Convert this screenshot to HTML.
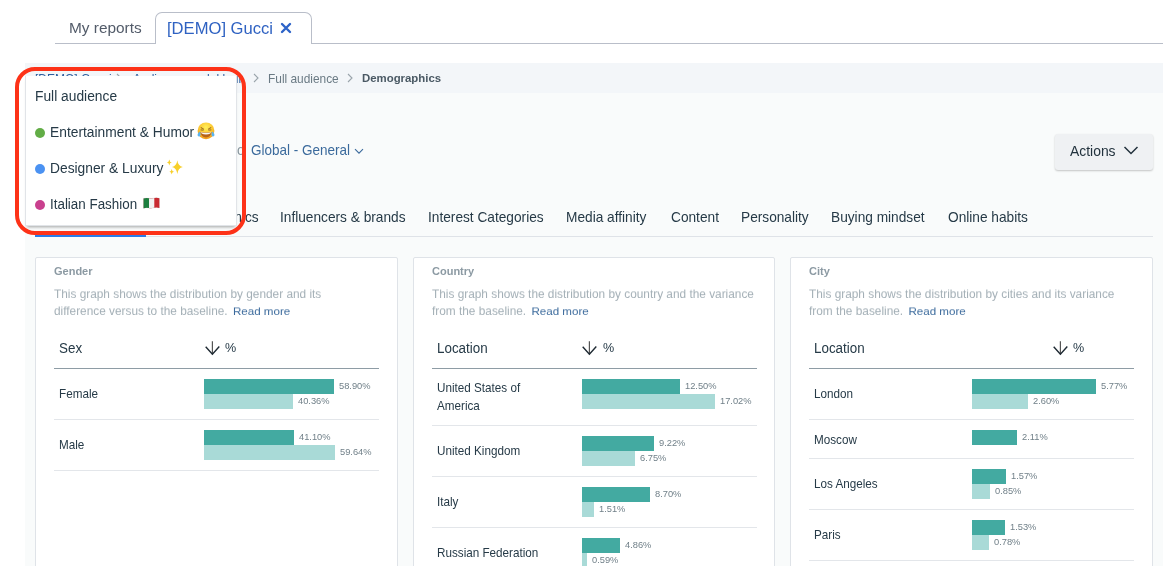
<!DOCTYPE html>
<html><head><meta charset="utf-8"><style>
html,body{margin:0;padding:0;}
body{width:1164px;height:566px;overflow:hidden;position:relative;background:#fff;font-family:"Liberation Sans", sans-serif;}
.t{position:absolute;white-space:nowrap;will-change:transform;}
.r{position:absolute;}
</style></head><body>
<div class="r" style="left:55px;top:43px;width:1108px;height:1px;background:#b9bec9"></div>
<div class="t" style="left:68.5px;top:19.02px;font-size:15.4px;line-height:18.48px;color:#525b69;font-weight:normal;">My reports</div>
<div class="r" style="left:155px;top:12px;width:157px;height:32px;background:#fff;border:1px solid #b9bec9;border-bottom:none;border-radius:7px 7px 0 0;box-sizing:border-box"></div>
<div class="t" style="left:167px;top:18.69px;font-size:16.6px;line-height:19.92px;color:#2f62c2;font-weight:normal;">[DEMO] Gucci</div>
<svg class="r" style="left:280px;top:22px" width="12" height="12" viewBox="0 0 12 12"><path d="M2 2L10 10M10 2L2 10" stroke="#2d63c8" stroke-width="2.4" stroke-linecap="round"/></svg>
<div class="r" style="left:25px;top:63px;width:1138px;height:30px;background:#f3f6f9"></div>
<div class="r" style="left:25px;top:93px;width:1138px;height:473px;background:#f9fbfb"></div>
<div class="t" style="left:35px;top:71.64px;font-size:12px;line-height:14.4px;color:#2d5f9e;font-weight:normal;">[DEMO] Gucci</div>
<svg class="r" style="left:116px;top:73px" width="6" height="10" viewBox="0 0 6 10"><path d="M1 1L5 5L1 9" stroke="#9aa4ab" stroke-width="1.1" fill="none"/></svg>
<div class="t" style="left:133px;top:71.64px;font-size:12px;line-height:14.4px;color:#2d5f9e;font-weight:normal;width:110px;overflow:hidden">Audience model builder</div>
<svg class="r" style="left:253px;top:73px" width="6" height="10" viewBox="0 0 6 10"><path d="M1 1L5 5L1 9" stroke="#9aa4ab" stroke-width="1.1" fill="none"/></svg>
<div class="t" style="left:268.4px;top:71.64px;font-size:11.9px;line-height:14.28px;color:#6a7a84;font-weight:normal;">Full audience</div>
<svg class="r" style="left:347px;top:73px" width="6" height="10" viewBox="0 0 6 10"><path d="M1 1L5 5L1 9" stroke="#9aa4ab" stroke-width="1.1" fill="none"/></svg>
<div class="t" style="left:362.3px;top:72.11px;font-size:11.4px;line-height:13.68px;color:#4a5964;font-weight:bold;">Demographics</div>
<div class="t" style="left:165.5px;top:142.73px;font-size:13.6px;line-height:16.32px;color:#8a979f;font-weight:normal;transform:scaleY(1.04);transform-origin:0 12.87px;">Compared to</div>
<div class="t" style="left:250.5px;top:143.12px;font-size:13.5px;line-height:16.2px;color:#3b6a9c;font-weight:normal;transform:scaleY(1.06);transform-origin:0 12.78px;">Global - General</div>
<svg class="r" style="left:353.5px;top:147.5px" width="10" height="7" viewBox="0 0 10 7"><path d="M1 1.2L5 5.2L9 1.2" stroke="#3b6a9c" stroke-width="1.1" fill="none"/></svg>
<div class="r" style="left:1055px;top:134px;width:98px;height:36px;background:#eff1f3;border-radius:3px;box-shadow:0 1px 2px rgba(0,0,0,0.22)"></div>
<div class="t" style="left:1070.4px;top:142.94px;font-size:13.9px;line-height:16.68px;color:#22323d;font-weight:normal;">Actions</div>
<svg class="r" style="left:1123px;top:145px" width="16" height="11" viewBox="0 0 16 11"><path d="M1.5 2L8 8.5L14.5 2" stroke="#22323d" stroke-width="1.5" fill="none"/></svg>
<div class="t" style="left:35px;top:210.03px;font-size:13.7px;line-height:16.44px;color:#263a47;font-weight:normal;transform:scaleY(1.08);transform-origin:0 12.97px;">Overview</div>
<div class="t" style="left:158.6px;top:210.03px;font-size:13.7px;line-height:16.44px;color:#263a47;font-weight:normal;transform:scaleY(1.08);transform-origin:0 12.97px;">Socioeconomics</div>
<div class="t" style="left:279.7px;top:210.03px;font-size:13.7px;line-height:16.44px;color:#263a47;font-weight:normal;transform:scaleY(1.08);transform-origin:0 12.97px;">Influencers &amp; brands</div>
<div class="t" style="left:427.5px;top:210.03px;font-size:13.7px;line-height:16.44px;color:#263a47;font-weight:normal;transform:scaleY(1.08);transform-origin:0 12.97px;">Interest Categories</div>
<div class="t" style="left:566.2px;top:210.03px;font-size:13.7px;line-height:16.44px;color:#263a47;font-weight:normal;transform:scaleY(1.08);transform-origin:0 12.97px;">Media affinity</div>
<div class="t" style="left:671.2px;top:210.03px;font-size:13.7px;line-height:16.44px;color:#263a47;font-weight:normal;transform:scaleY(1.08);transform-origin:0 12.97px;">Content</div>
<div class="t" style="left:741px;top:210.03px;font-size:13.7px;line-height:16.44px;color:#263a47;font-weight:normal;transform:scaleY(1.08);transform-origin:0 12.97px;">Personality</div>
<div class="t" style="left:830.7px;top:210.03px;font-size:13.7px;line-height:16.44px;color:#263a47;font-weight:normal;transform:scaleY(1.08);transform-origin:0 12.97px;">Buying mindset</div>
<div class="t" style="left:947.6px;top:210.03px;font-size:13.7px;line-height:16.44px;color:#263a47;font-weight:normal;transform:scaleY(1.08);transform-origin:0 12.97px;">Online habits</div>
<div class="r" style="left:35px;top:236px;width:1118px;height:1px;background:#dfe3e8"></div>
<div class="r" style="left:35px;top:235px;width:111px;height:2px;background:#2a7be6"></div>
<div class="r" style="left:35px;top:257px;width:363px;height:320px;background:#fff;border:1px solid #dfe3e8;border-radius:2px;box-sizing:border-box"></div>
<div class="t" style="left:54px;top:264.69px;font-size:11px;line-height:13.2px;color:#8c9aa3;font-weight:bold;">Gender</div>
<div class="t" style="left:54px;top:286.98px;font-size:11.85px;line-height:14.22px;color:#a3afb6;font-weight:normal;transform:scaleY(0.95);transform-origin:0 11.22px;">This graph shows the distribution by gender and its</div>
<div class="t" style="left:54px;top:303.98px;font-size:11.85px;line-height:14.22px;color:#a3afb6;font-weight:normal;transform:scaleY(0.95);transform-origin:0 11.22px;">difference versus to the baseline. <span style="color:#3b6a9c;font-size:11.6px;margin-left:2px">Read more</span></div>
<div class="t" style="left:59.3px;top:341.12px;font-size:13.4px;line-height:16.08px;color:#263a47;font-weight:normal;transform:scaleY(1.05);transform-origin:0 12.68px;">Sex</div>
<svg class="r" style="left:204.5px;top:341px" width="15" height="15" viewBox="0 0 15 15"><path d="M7.4 0.2V13.3" stroke="#555" stroke-width="1.2" fill="none"/><path d="M0.7 5.7L7.4 13.2L14.3 5.5" stroke="#1f2a33" stroke-width="1.4" fill="none"/></svg>
<div class="t" style="left:225.0px;top:341.47px;font-size:12.6px;line-height:15.12px;color:#263a47;font-weight:normal;">%</div>
<div class="r" style="left:54px;top:368px;width:325px;height:1px;background:#8e9ca5"></div>
<div class="r" style="left:413px;top:257px;width:362px;height:320px;background:#fff;border:1px solid #dfe3e8;border-radius:2px;box-sizing:border-box"></div>
<div class="t" style="left:432px;top:264.69px;font-size:11px;line-height:13.2px;color:#8c9aa3;font-weight:bold;">Country</div>
<div class="t" style="left:432px;top:286.98px;font-size:11.85px;line-height:14.22px;color:#a3afb6;font-weight:normal;transform:scaleY(0.95);transform-origin:0 11.22px;">This graph shows the distribution by country and the variance</div>
<div class="t" style="left:432px;top:303.98px;font-size:11.85px;line-height:14.22px;color:#a3afb6;font-weight:normal;transform:scaleY(0.95);transform-origin:0 11.22px;">from the baseline. <span style="color:#3b6a9c;font-size:11.6px;margin-left:2px">Read more</span></div>
<div class="t" style="left:437.3px;top:341.12px;font-size:13.4px;line-height:16.08px;color:#263a47;font-weight:normal;transform:scaleY(1.05);transform-origin:0 12.68px;">Location</div>
<svg class="r" style="left:582.3px;top:341px" width="15" height="15" viewBox="0 0 15 15"><path d="M7.4 0.2V13.3" stroke="#555" stroke-width="1.2" fill="none"/><path d="M0.7 5.7L7.4 13.2L14.3 5.5" stroke="#1f2a33" stroke-width="1.4" fill="none"/></svg>
<div class="t" style="left:602.8px;top:341.47px;font-size:12.6px;line-height:15.12px;color:#263a47;font-weight:normal;">%</div>
<div class="r" style="left:432px;top:368px;width:325px;height:1px;background:#8e9ca5"></div>
<div class="r" style="left:790px;top:257px;width:363px;height:320px;background:#fff;border:1px solid #dfe3e8;border-radius:2px;box-sizing:border-box"></div>
<div class="t" style="left:809px;top:264.69px;font-size:11px;line-height:13.2px;color:#8c9aa3;font-weight:bold;">City</div>
<div class="t" style="left:809px;top:286.98px;font-size:11.85px;line-height:14.22px;color:#a3afb6;font-weight:normal;transform:scaleY(0.95);transform-origin:0 11.22px;">This graph shows the distribution by cities and its variance</div>
<div class="t" style="left:809px;top:303.98px;font-size:11.85px;line-height:14.22px;color:#a3afb6;font-weight:normal;transform:scaleY(0.95);transform-origin:0 11.22px;">from the baseline. <span style="color:#3b6a9c;font-size:11.6px;margin-left:2px">Read more</span></div>
<div class="t" style="left:814.3px;top:341.12px;font-size:13.4px;line-height:16.08px;color:#263a47;font-weight:normal;transform:scaleY(1.05);transform-origin:0 12.68px;">Location</div>
<svg class="r" style="left:1052.6px;top:341px" width="15" height="15" viewBox="0 0 15 15"><path d="M7.4 0.2V13.3" stroke="#555" stroke-width="1.2" fill="none"/><path d="M0.7 5.7L7.4 13.2L14.3 5.5" stroke="#1f2a33" stroke-width="1.4" fill="none"/></svg>
<div class="t" style="left:1073.1px;top:341.47px;font-size:12.6px;line-height:15.12px;color:#263a47;font-weight:normal;">%</div>
<div class="r" style="left:809px;top:368px;width:325px;height:1px;background:#8e9ca5"></div>
<div class="t" style="left:59px;top:387.23px;font-size:11.7px;line-height:14.04px;color:#263a47;font-weight:normal;transform:scaleY(1.03);transform-origin:0 11.07px;">Female</div>
<div class="r" style="left:204px;top:379px;width:130px;height:15px;background:#43aaa1"></div>
<div class="t" style="left:339px;top:380.50px;font-size:9.3px;line-height:11.16px;color:#718089;font-weight:normal;">58.90%</div>
<div class="r" style="left:204px;top:394px;width:89px;height:15px;background:#a9dad7"></div>
<div class="t" style="left:298px;top:395.80px;font-size:9.3px;line-height:11.16px;color:#718089;font-weight:normal;">40.36%</div>
<div class="r" style="left:54px;top:419px;width:325px;height:1px;background:#e3e6ea"></div>
<div class="t" style="left:59px;top:438.23px;font-size:11.7px;line-height:14.04px;color:#263a47;font-weight:normal;transform:scaleY(1.03);transform-origin:0 11.07px;">Male</div>
<div class="r" style="left:204px;top:430px;width:90px;height:15px;background:#43aaa1"></div>
<div class="t" style="left:299px;top:431.50px;font-size:9.3px;line-height:11.16px;color:#718089;font-weight:normal;">41.10%</div>
<div class="r" style="left:204px;top:445px;width:131px;height:15px;background:#a9dad7"></div>
<div class="t" style="left:340px;top:446.80px;font-size:9.3px;line-height:11.16px;color:#718089;font-weight:normal;">59.64%</div>
<div class="r" style="left:54px;top:470px;width:325px;height:1px;background:#e3e6ea"></div>
<div class="t" style="left:437px;top:381.23px;font-size:11.7px;line-height:14.04px;color:#263a47;font-weight:normal;transform:scaleY(1.03);transform-origin:0 11.07px;">United States of</div>
<div class="t" style="left:437px;top:398.93px;font-size:11.7px;line-height:14.04px;color:#263a47;font-weight:normal;transform:scaleY(1.03);transform-origin:0 11.07px;">America</div>
<div class="r" style="left:582px;top:379px;width:98px;height:15px;background:#43aaa1"></div>
<div class="t" style="left:685px;top:380.50px;font-size:9.3px;line-height:11.16px;color:#718089;font-weight:normal;">12.50%</div>
<div class="r" style="left:582px;top:394px;width:133px;height:15px;background:#a9dad7"></div>
<div class="t" style="left:720px;top:395.80px;font-size:9.3px;line-height:11.16px;color:#718089;font-weight:normal;">17.02%</div>
<div class="r" style="left:432px;top:425px;width:325px;height:1px;background:#e3e6ea"></div>
<div class="t" style="left:437px;top:444.23px;font-size:11.7px;line-height:14.04px;color:#263a47;font-weight:normal;transform:scaleY(1.03);transform-origin:0 11.07px;">United Kingdom</div>
<div class="r" style="left:582px;top:436px;width:72px;height:15px;background:#43aaa1"></div>
<div class="t" style="left:659px;top:437.50px;font-size:9.3px;line-height:11.16px;color:#718089;font-weight:normal;">9.22%</div>
<div class="r" style="left:582px;top:451px;width:53px;height:15px;background:#a9dad7"></div>
<div class="t" style="left:640px;top:452.80px;font-size:9.3px;line-height:11.16px;color:#718089;font-weight:normal;">6.75%</div>
<div class="r" style="left:432px;top:476px;width:325px;height:1px;background:#e3e6ea"></div>
<div class="t" style="left:437px;top:495.23px;font-size:11.7px;line-height:14.04px;color:#263a47;font-weight:normal;transform:scaleY(1.03);transform-origin:0 11.07px;">Italy</div>
<div class="r" style="left:582px;top:487px;width:68px;height:15px;background:#43aaa1"></div>
<div class="t" style="left:655px;top:488.50px;font-size:9.3px;line-height:11.16px;color:#718089;font-weight:normal;">8.70%</div>
<div class="r" style="left:582px;top:502px;width:12px;height:15px;background:#a9dad7"></div>
<div class="t" style="left:599px;top:503.80px;font-size:9.3px;line-height:11.16px;color:#718089;font-weight:normal;">1.51%</div>
<div class="r" style="left:432px;top:527px;width:325px;height:1px;background:#e3e6ea"></div>
<div class="t" style="left:437px;top:546.23px;font-size:11.7px;line-height:14.04px;color:#263a47;font-weight:normal;transform:scaleY(1.03);transform-origin:0 11.07px;">Russian Federation</div>
<div class="r" style="left:582px;top:538px;width:38px;height:15px;background:#43aaa1"></div>
<div class="t" style="left:625px;top:539.50px;font-size:9.3px;line-height:11.16px;color:#718089;font-weight:normal;">4.86%</div>
<div class="r" style="left:582px;top:553px;width:4.6px;height:15px;background:#a9dad7"></div>
<div class="t" style="left:591.6px;top:554.80px;font-size:9.3px;line-height:11.16px;color:#718089;font-weight:normal;">0.59%</div>
<div class="r" style="left:432px;top:578px;width:325px;height:1px;background:#e3e6ea"></div>
<div class="t" style="left:814px;top:387.23px;font-size:11.7px;line-height:14.04px;color:#263a47;font-weight:normal;transform:scaleY(1.03);transform-origin:0 11.07px;">London</div>
<div class="r" style="left:972px;top:379px;width:124px;height:15px;background:#43aaa1"></div>
<div class="t" style="left:1101px;top:380.50px;font-size:9.3px;line-height:11.16px;color:#718089;font-weight:normal;">5.77%</div>
<div class="r" style="left:972px;top:394px;width:56px;height:15px;background:#a9dad7"></div>
<div class="t" style="left:1033px;top:395.80px;font-size:9.3px;line-height:11.16px;color:#718089;font-weight:normal;">2.60%</div>
<div class="r" style="left:809px;top:419px;width:325px;height:1px;background:#e3e6ea"></div>
<div class="t" style="left:814px;top:432.73px;font-size:11.7px;line-height:14.04px;color:#263a47;font-weight:normal;transform:scaleY(1.03);transform-origin:0 11.07px;">Moscow</div>
<div class="r" style="left:972px;top:430px;width:45px;height:15px;background:#43aaa1"></div>
<div class="t" style="left:1022px;top:431.50px;font-size:9.3px;line-height:11.16px;color:#718089;font-weight:normal;">2.11%</div>
<div class="r" style="left:809px;top:458px;width:325px;height:1px;background:#e3e6ea"></div>
<div class="t" style="left:814px;top:477.23px;font-size:11.7px;line-height:14.04px;color:#263a47;font-weight:normal;transform:scaleY(1.03);transform-origin:0 11.07px;">Los Angeles</div>
<div class="r" style="left:972px;top:469px;width:34px;height:15px;background:#43aaa1"></div>
<div class="t" style="left:1011px;top:470.50px;font-size:9.3px;line-height:11.16px;color:#718089;font-weight:normal;">1.57%</div>
<div class="r" style="left:972px;top:484px;width:18px;height:15px;background:#a9dad7"></div>
<div class="t" style="left:995px;top:485.80px;font-size:9.3px;line-height:11.16px;color:#718089;font-weight:normal;">0.85%</div>
<div class="r" style="left:809px;top:509px;width:325px;height:1px;background:#e3e6ea"></div>
<div class="t" style="left:814px;top:528.23px;font-size:11.7px;line-height:14.04px;color:#263a47;font-weight:normal;transform:scaleY(1.03);transform-origin:0 11.07px;">Paris</div>
<div class="r" style="left:972px;top:520px;width:33px;height:15px;background:#43aaa1"></div>
<div class="t" style="left:1010px;top:521.50px;font-size:9.3px;line-height:11.16px;color:#718089;font-weight:normal;">1.53%</div>
<div class="r" style="left:972px;top:535px;width:17px;height:15px;background:#a9dad7"></div>
<div class="t" style="left:994px;top:536.80px;font-size:9.3px;line-height:11.16px;color:#718089;font-weight:normal;">0.78%</div>
<div class="r" style="left:809px;top:560px;width:325px;height:1px;background:#e3e6ea"></div>
<div class="t" style="left:814px;top:579.23px;font-size:11.7px;line-height:14.04px;color:#263a47;font-weight:normal;transform:scaleY(1.03);transform-origin:0 11.07px;">Berlin</div>
<div class="r" style="left:972px;top:571px;width:30px;height:15px;background:#43aaa1"></div>
<div class="t" style="left:1007px;top:572.50px;font-size:9.3px;line-height:11.16px;color:#718089;font-weight:normal;">1.40%</div>
<div class="r" style="left:972px;top:586px;width:15px;height:15px;background:#a9dad7"></div>
<div class="t" style="left:992px;top:587.80px;font-size:9.3px;line-height:11.16px;color:#718089;font-weight:normal;">0.70%</div>
<div class="r" style="left:809px;top:611px;width:325px;height:1px;background:#e3e6ea"></div>
<div class="r" style="left:25px;top:76px;width:212px;height:150px;background:#fff;border:1px solid #e1e4e8;border-top:none;box-sizing:border-box;box-shadow:0 3px 3px -2px rgba(0,0,0,0.35)"></div>
<div class="t" style="left:35px;top:88.54px;font-size:13.8px;line-height:16.56px;color:#263a47;font-weight:normal;transform:scaleY(1.08);transform-origin:0 13.06px;">Full audience</div>
<div class="r" style="left:35px;top:127.9px;width:10px;height:10px;background:#62ad46;border-radius:50%"></div>
<div class="t" style="left:50.3px;top:124.74px;font-size:13.8px;line-height:16.56px;color:#263a47;font-weight:normal;transform:scaleY(1.08);transform-origin:0 13.06px;">Entertainment &amp; Humor</div>
<div class="r" style="left:35px;top:163.9px;width:10px;height:10px;background:#4b92f2;border-radius:50%"></div>
<div class="t" style="left:50.3px;top:160.74px;font-size:13.8px;line-height:16.56px;color:#263a47;font-weight:normal;transform:scaleY(1.08);transform-origin:0 13.06px;">Designer &amp; Luxury</div>
<div class="r" style="left:35px;top:199.6px;width:10px;height:10px;background:#c9408e;border-radius:50%"></div>
<div class="t" style="left:50.3px;top:196.82px;font-size:13.4px;line-height:16.08px;color:#263a47;font-weight:normal;transform:scaleY(1.08);transform-origin:0 12.68px;">Italian Fashion</div>
<svg class="r" style="left:196px;top:121px" width="20" height="20" viewBox="0 0 20 20">
<defs><radialGradient id="fg" cx="50%" cy="30%" r="70%"><stop offset="0" stop-color="#fff05a"/><stop offset="0.55" stop-color="#fcc831"/><stop offset="1" stop-color="#f29a1c"/></radialGradient></defs>
<circle cx="10" cy="9.8" r="8.4" fill="url(#fg)"/>
<path d="M4.8 6.6Q6.4 7.2 7.8 8.2M15.2 6.6Q13.6 7.2 12.2 8.2" stroke="#7a4a12" stroke-width="0.9" fill="none"/>
<path d="M4.6 8.9L7.6 9.1M15.4 8.9L12.4 9.1" stroke="#7a4a12" stroke-width="0.8" fill="none"/>
<path d="M4.4 11Q10 12 15.6 11Q15 16.4 10 16.4Q5 16.4 4.4 11Z" fill="#b8631a"/>
<path d="M4.8 11.3Q10 12.3 15.2 11.3Q15 13.2 10 13.4Q5 13.2 4.8 11.3Z" fill="#f6f6f6"/>
<path d="M3.4 10.6Q1.2 13.2 1.6 14.6Q2.4 16 3.9 15.3Q5 14.4 4.2 11.6Z" fill="#5ab4f0"/>
<path d="M16.6 10.6Q18.8 13.2 18.4 14.6Q17.6 16 16.1 15.3Q15 14.4 15.8 11.6Z" fill="#5ab4f0"/>
</svg>
<svg class="r" style="left:165px;top:158px" width="20" height="18" viewBox="0 0 20 18">
<path d="M12.3 2.3Q13 8.2 17.8 8.9Q13 9.6 12.3 16Q11.6 9.6 7 8.9Q11.6 8.2 12.3 2.3Z" fill="#f7cf2a"/>
<path d="M4.3 1.6Q4.6 4.2 6.8 4.5Q4.6 4.8 4.3 7.4Q4 4.8 1.8 4.5Q4 4.2 4.3 1.6Z" fill="#f7cf2a"/>
<path d="M6.7 11Q7 13.5 9 13.8Q7 14.1 6.7 16.6Q6.4 14.1 4.4 13.8Q6.4 13.5 6.7 11Z" fill="#f7cf2a"/>
</svg>
<svg class="r" style="left:142.5px;top:196.5px" width="17" height="12" viewBox="0 0 17 12">
<path d="M0.6 1.4Q3 0.6 5.8 1.2Q8.4 1.8 11.1 1.1Q13.8 0.4 16.4 1.2V10.9Q13.8 10.1 11.1 10.8Q8.4 11.5 5.8 11Q3 10.4 0.6 11.2Z" fill="#c92a31"/>
<path d="M0.6 1.4Q3 0.6 5.8 1.2Q8.4 1.8 11.3 1.05V10.85Q8.4 11.5 5.8 11Q3 10.4 0.6 11.2Z" fill="#f2f2f2"/>
<path d="M0.6 1.4Q3 0.6 6 1.25V11.05Q3 10.4 0.6 11.2Z" fill="#1d7f3f"/>
<path d="M0.6 1.4Q3 0.6 5.8 1.2Q8.4 1.8 11.1 1.1Q13.8 0.4 16.4 1.2V10.9Q13.8 10.1 11.1 10.8Q8.4 11.5 5.8 11Q3 10.4 0.6 11.2Z" fill="none" stroke="rgba(0,0,0,0.1)" stroke-width="0.5"/>
</svg>
<div class="r" style="left:15px;top:67px;width:231px;height:167.5px;border:4.2px solid #fd3218;border-radius:20px;box-sizing:border-box"></div>
</body></html>
